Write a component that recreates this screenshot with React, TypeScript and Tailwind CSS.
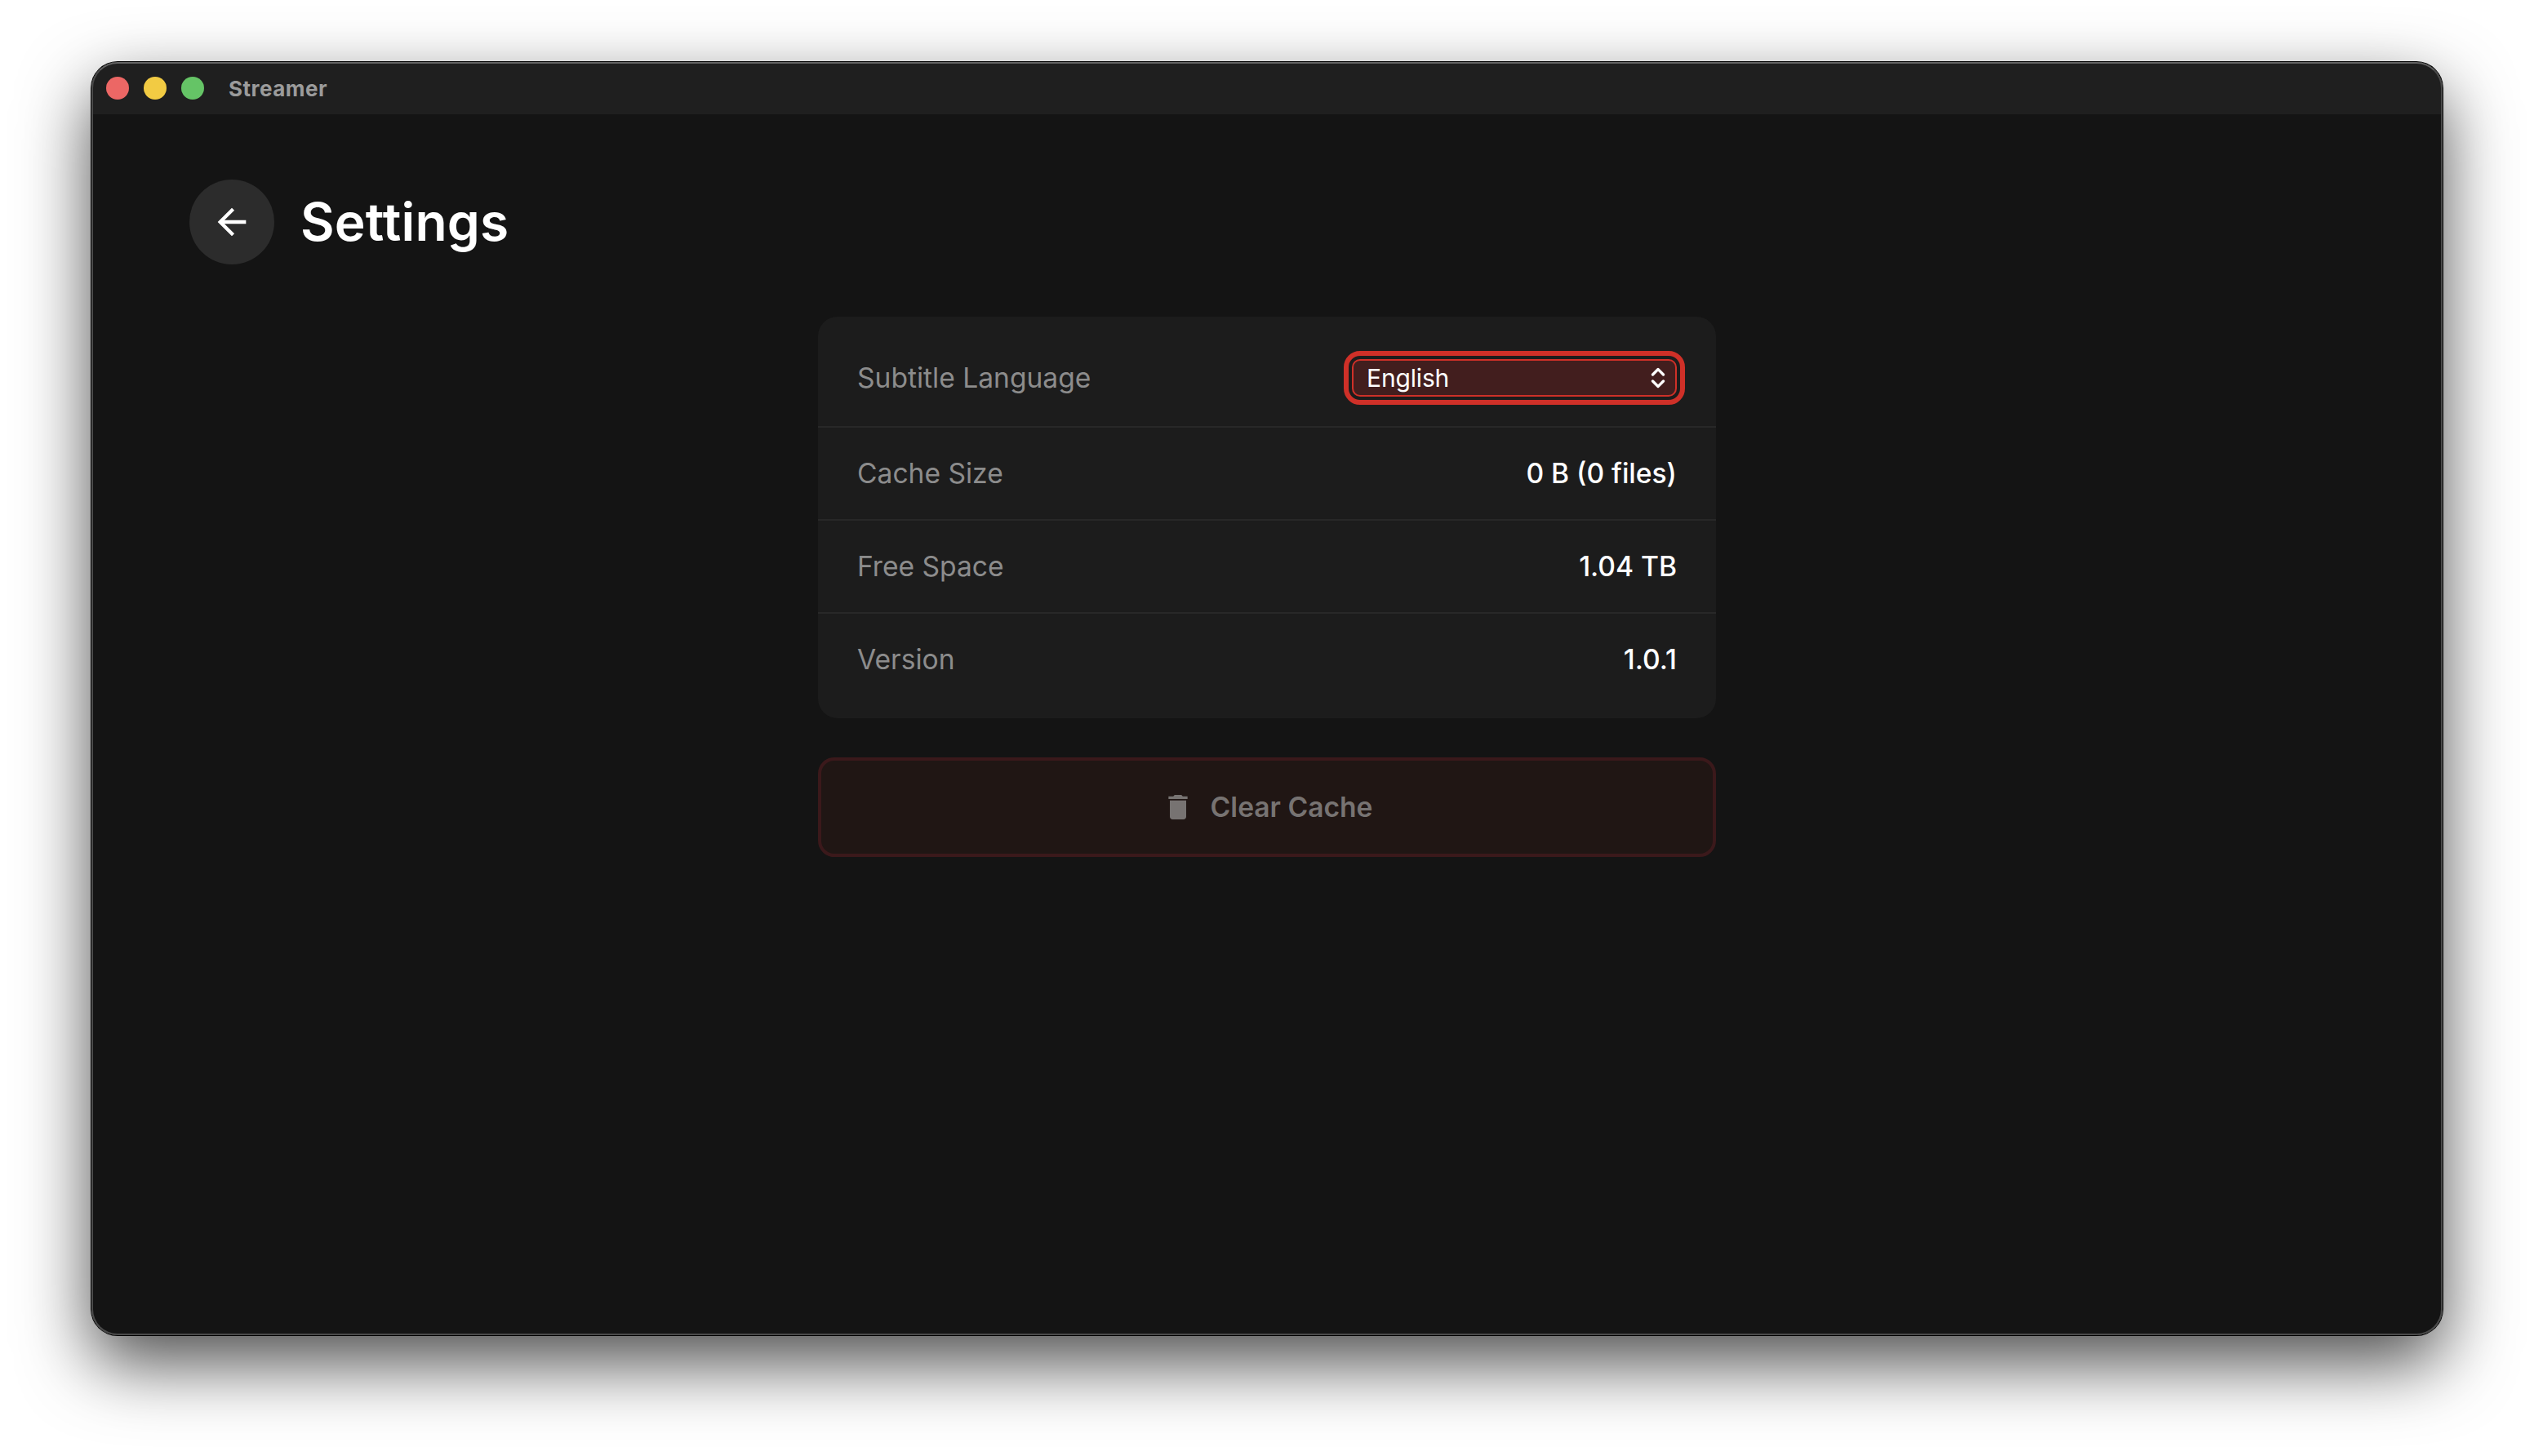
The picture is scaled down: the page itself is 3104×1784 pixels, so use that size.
import React from "react";
import { MdDelete } from "react-icons/md";

const TitleBar: React.FC = () => {
  return (
    <header className="flex h-16 items-center bg-[#1f1f1f] pl-[18px]">
      <div className="flex items-center gap-[18px]">
        <span className="size-7 rounded-full bg-[#ec6765]" />
        <span className="size-7 rounded-full bg-[#f2cb43]" />
        <span className="size-7 rounded-full bg-[#65c466]" />
      </div>
      <span className="ml-[30px] pt-0.5 text-[26px] leading-8 font-bold tracking-[0.5px] text-[#9b9b9b]">
        Streamer
      </span>
    </header>
  );
};

const ArrowBack: React.FC = () => {
  return (
    <svg viewBox="0 0 24 24" className="size-[52px]" fill="currentColor">
      <path d="M7.825 13l5.6 5.6L12 20l-8-8 8-8 1.425 1.4-5.6 5.6H20v2z" />
    </svg>
  );
};

const LanguageSelect: React.FC = () => {
  return (
    <button className="flex h-[46px] w-[398px] items-center justify-between rounded-[10px] border-2 border-[#cf3028] bg-[#421e1e] pr-[11px] pl-4 text-[30px] leading-9 font-normal tracking-[-0.15px] text-white outline-[6px] outline-offset-4 outline-[#cf3028]">
      <span>English</span>
      <svg
        viewBox="0 0 20 28"
        className="h-7 w-5"
        fill="none"
        stroke="currentColor"
        strokeWidth="3.3"
        strokeLinecap="round"
        strokeLinejoin="round"
      >
        <path d="M3.5 10L10 3.5l6.5 6.5M3.5 18l6.5 6.5 6.5-6.5" />
      </svg>
    </button>
  );
};

interface RowProps {
  label: string;
  children: React.ReactNode;
}

const Row: React.FC<RowProps> = ({ label, children }) => {
  return (
    <div className="flex h-[114px] items-center justify-between border-b-2 border-[#282828] px-12 first:h-[120px] last:h-28 last:border-b-0">
      <span className="text-[33.6px] leading-10 text-[#8c8c8c]">{label}</span>
      <div className="text-[33.6px] leading-10 font-medium text-white">{children}</div>
    </div>
  );
};

const App: React.FC = () => {
  return (
    <div className="h-[1784px] w-[3104px] overflow-hidden bg-white px-28 pt-[76px] font-['Inter',sans-serif]">
      <div className="h-[1560px] w-[2880px] rounded-[32px] shadow-[0_0_0_1px_#000,0_34px_86px_rgba(0,0,0,0.7)]">
        <div className="relative h-full overflow-hidden rounded-[32px] bg-[#141414]">
          <TitleBar />
          <main className="px-[120px] pt-20">
            <div className="flex items-center gap-8">
              <button className="flex size-[104px] items-center justify-center rounded-full bg-[#2c2c2c] text-white">
                <ArrowBack />
              </button>
              <h1 className="text-[64px] leading-[80px] font-semibold tracking-[0.2px] text-white">Settings</h1>
            </div>
            <div className="mx-auto mt-16 w-[1100px]">
              <section className="rounded-3xl bg-[#1c1c1c] py-4">
                <Row label="Subtitle Language">
                  <LanguageSelect />
                </Row>
                <Row label="Cache Size">0 B (0 files)</Row>
                <Row label="Free Space">1.04 TB</Row>
                <Row label="Version">1.0.1</Row>
              </section>
              <button className="mt-12 flex h-[122px] w-full items-center justify-center gap-5 rounded-[20px] border-4 border-[#3b191b] bg-[#201614] text-[33.6px] font-semibold text-[#777372]">
                <MdDelete className="size-10" />
                Clear Cache
              </button>
            </div>
          </main>
          {/* light inner edge of the window frame */}
          <div className="pointer-events-none absolute inset-0 rounded-[32px] border-2 border-[#4a4a4a] border-t-[#626262]" />
        </div>
      </div>
    </div>
  );
};

export default App;
